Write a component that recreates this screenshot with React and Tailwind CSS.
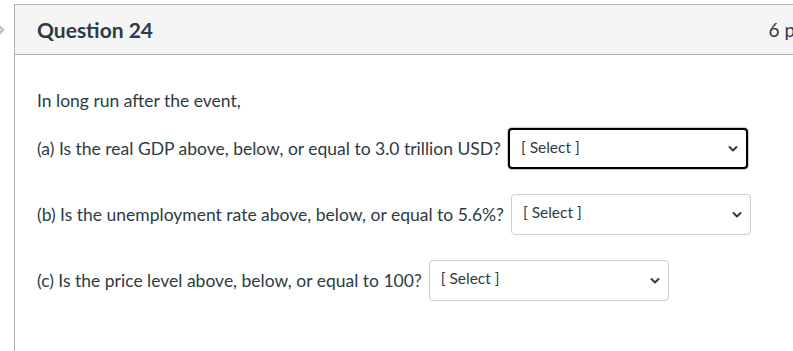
import React from 'react';

function SelectBox({ focused }) {
    return (
        <div
            className={`relative ml-[7px] flex h-[41px] w-[240px] shrink-0 items-start rounded-[4px] bg-white pl-[11px] pt-[6px] ${
                focused ? 'border-2 border-black ring-1 ring-[#c7cdd1]' : 'border border-[#c7cdd1]'
            }`}
        >
            <span className="text-[15.5px] leading-[22px] text-[#2d3b45]">[ Select ]</span>
            <svg className="absolute right-[8px] top-1/2 -translate-y-1/2" width="10" height="7" viewBox="0 0 10 7">
                <path d="M1.5 1.5 L5 5 L8.5 1.5" fill="none" stroke="#2d3b45" strokeWidth="2" strokeLinecap="round" strokeLinejoin="round" />
            </svg>
        </div>
    );
}

export default function App() {
    const rows = [
        { text: '(a) Is the real GDP above, below, or equal to 3.0 trillion USD?', focused: true },
        { text: '(b) Is the unemployment rate above, below, or equal to 5.6%?', focused: false },
        { text: '(c) Is the price level above, below, or equal to 100?', focused: false },
    ];

    return (
        <div className="relative h-[351px] w-full overflow-hidden bg-white font-['Lato',sans-serif] text-[#2d3b45]">
            {/* cut-off chevron on the left edge */}
            <svg className="absolute left-[-6px] top-[22px]" width="12" height="16" viewBox="0 0 12 16">
                <path d="M3 2 L9 8 L3 14" fill="none" stroke="#b9c3cc" strokeWidth="2.5" strokeLinecap="round" strokeLinejoin="round" />
            </svg>

            <div className="ml-[14px] mt-[4px] w-[816px] border-l border-t border-[#b3b3b3]">
                {/* Header */}
                <div className="flex h-[50px] items-center justify-between border-b border-[#b3b3b3] bg-[#f5f5f5] pl-[22px] pr-[20px]">
                    <h2 className="text-[21px] font-bold leading-none">Question 24</h2>
                    <span className="text-[19px] leading-none">6 pts</span>
                </div>

                {/* Body */}
                <div className="h-[300px] pl-[22px] pt-[33px]">
                    <p className="text-[17.5px] leading-[26px]">In long run after the event,</p>
                    <div className="mt-[14px] flex flex-col gap-[25px]">
                        {rows.map((row) => (
                            <div key={row.text} className="flex h-[41px] items-center">
                                <span className="text-[17.5px] leading-[26px]">{row.text}</span>
                                <SelectBox focused={row.focused} />
                            </div>
                        ))}
                    </div>
                </div>
            </div>
        </div>
    );
}
